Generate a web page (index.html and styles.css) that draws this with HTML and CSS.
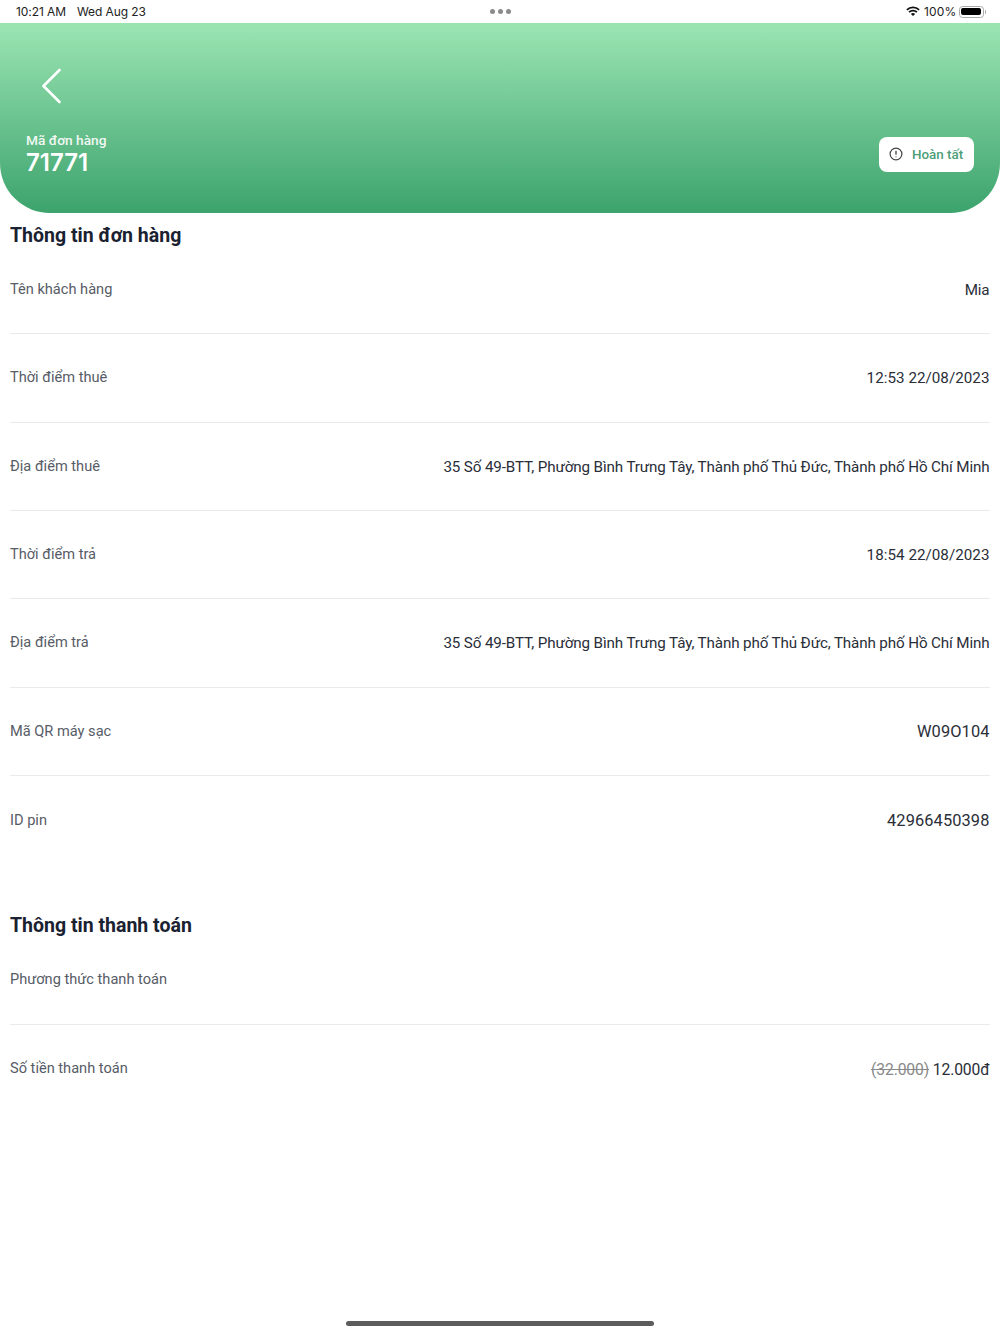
FILE: index.html
```html
<!doctype html>
<html lang="vi">
<head>
<meta charset="utf-8">
<title>Thông tin đơn hàng</title>
<link rel="stylesheet" href="styles.css">
</head>
<body>
<div class="statusbar">
	<div class="status-time"><span>10:21 AM</span><span>Wed Aug 23</span></div>
	<div class="status-dots"><i></i><i></i><i></i></div>
	<div class="status-right">
		<svg class="wifi" width="14" height="11" viewBox="0 0 16 12">
			<path d="M1 4.2a10 10 0 0 1 14 0" fill="none" stroke="#111" stroke-width="2"/>
			<path d="M3.5 6.8a6.4 6.4 0 0 1 9 0" fill="none" stroke="#111" stroke-width="2"/>
			<path d="M8 11.2 5.6 8.8a3.4 3.4 0 0 1 4.8 0z" fill="#111"/>
		</svg>
		<span>100%</span>
		<div class="battery"><div class="battery-fill"></div></div>
		<div class="battery-tip"></div>
	</div>
</div>
<header class="orderhead">
	<svg class="backicon" width="20" height="36" viewBox="0 0 20 36">
		<path d="M18.5 2 2.5 18l16 16" fill="none" stroke="#fff" stroke-width="2.6" stroke-linecap="round" stroke-linejoin="round"/>
	</svg>
	<div class="orderhead-row">
		<div>
			<div class="order-label">Mã đơn hàng</div>
			<div class="order-id">71771</div>
		</div>
		<div class="donebtn">
			<svg width="14" height="14" viewBox="0 0 14 14">
				<circle cx="7" cy="7" r="5.9" fill="none" stroke="#444" stroke-width="1.2"/>
				<path d="M7 3.8v3.9M7 9.4v.9" fill="none" stroke="#444" stroke-width="1.3"/>
			</svg>
			<span>Hoàn tất</span>
		</div>
	</div>
</header>
<section class="infosection">
	<h2>Thông tin đơn hàng</h2>
	<div class="inforow"><span class="lbl">Tên khách hàng</span><span class="val">Mia</span></div>
	<div class="inforow"><span class="lbl">Thời điểm thuê</span><span class="val date">12:53 22/08/2023</span></div>
	<div class="inforow"><span class="lbl">Địa điểm thuê</span><span class="val">35 Số 49-BTT, Phường Bình Trưng Tây, Thành phố Thủ Đức, Thành phố Hồ Chí Minh</span></div>
	<div class="inforow"><span class="lbl">Thời điểm trả</span><span class="val date">18:54 22/08/2023</span></div>
	<div class="inforow"><span class="lbl">Địa điểm trả</span><span class="val">35 Số 49-BTT, Phường Bình Trưng Tây, Thành phố Thủ Đức, Thành phố Hồ Chí Minh</span></div>
	<div class="inforow"><span class="lbl">Mã QR máy sạc</span><span class="val num">W09O104</span></div>
	<div class="inforow"><span class="lbl">ID pin</span><span class="val num">42966450398</span></div>
</section>
<section class="infosection second">
	<h2>Thông tin thanh toán</h2>
	<div class="inforow"><span class="lbl">Phương thức thanh toán</span><span class="val"></span></div>
	<div class="inforow"><span class="lbl">Số tiền thanh toán</span><span class="val amount"><s>(32.000)</s> 12.000đ</span></div>
</section>
<div class="homebar"></div>
</body>
</html>
```

FILE: styles.css
```css
html, body {
	height: 100%;
	margin: 0;
	background: #fff;
}
body {
	display: flex;
	flex-direction: column;
	height: 1334px;
	overflow: hidden;
	font-family: Roboto, "Liberation Sans", sans-serif;
	color: #1c2230;
}
.statusbar {
	display: grid;
	grid-template-columns: 1fr auto 1fr;
	align-items: center;
	height: 23px;
	padding: 0 14px 0 16px;
	font-family: Inter, sans-serif;
	font-size: 12px;
	color: #222;
}
.status-time {
	display: flex;
	gap: 11px;
	letter-spacing: -0.08px;
}
.status-dots {
	display: flex;
	gap: 3px;
	margin-left: -2px;
}
.status-dots i {
	width: 5px;
	height: 5px;
	border-radius: 50%;
	background: #8a8a8a;
}
.status-right {
	display: flex;
	align-items: center;
	justify-content: flex-end;
}
.status-right span {
	margin: 0 2px 0 4px;
	letter-spacing: 0.2px;
}
.battery {
	width: 25px;
	height: 12px;
	padding: 1.5px;
	box-sizing: border-box;
	border: 1px solid #aaa;
	border-radius: 3.5px;
}
.battery-fill {
	height: 100%;
	border-radius: 2px;
	background: #000;
}
.battery-tip {
	width: 1.5px;
	height: 4px;
	margin-left: 1px;
	border-radius: 0 1px 1px 0;
	background: #aaa;
}
.orderhead {
	display: flex;
	flex-direction: column;
	height: 190px;
	box-sizing: border-box;
	padding: 45px 26px 0;
	border-radius: 0 0 50px 50px;
	background: linear-gradient(#9be5b3, #3ca36d);
}
.backicon {
	margin-left: 15px;
}
.orderhead-row {
	display: flex;
	justify-content: space-between;
	align-items: center;
	margin-top: 27px;
}
.order-label {
	font-size: 13.7px;
	font-weight: 500;
	line-height: 18px;
	color: #f1f8f3;
}
.order-id {
	font-family: Inter, sans-serif;
	font-size: 24px;
	font-weight: 600;
	line-height: 28px;
	color: #fff;
}
.donebtn {
	display: flex;
	align-items: center;
	gap: 9px;
	width: 95px;
	height: 35px;
	box-sizing: border-box;
	padding-left: 10px;
	border-radius: 8px;
	background: #fff;
	font-size: 13.4px;
	font-weight: 500;
	color: #4d9e79;
}
.infosection {
	padding: 0 10.5px 0 10px;
}
.infosection.second {
	margin-top: 39px;
}
.infosection h2 {
	height: 21px;
	margin: 0;
	padding-top: 12px;
	font-size: 19.5px;
	font-weight: 700;
	line-height: 21px;
	color: #1a2130;
}
.inforow {
	display: flex;
	justify-content: space-between;
	align-items: center;
	height: 88.33px;
	box-sizing: border-box;
	border-bottom: 1px solid #e9ebea;
}
.inforow:last-child {
	border-bottom: 0;
}
.lbl {
	padding-bottom: 1px;
	font-size: 14.6px;
	color: #575c66;
}
.val {
	padding-top: 1px;
	font-size: 15.2px;
	letter-spacing: -0.13px;
	color: #2a2e38;
}
.val.date {
	letter-spacing: 0.03px;
}
.val.num {
	font-size: 16.4px;
	letter-spacing: 0.1px;
}
.val.amount {
	font-size: 15.7px;
}
.val s {
	color: #8a8a8a;
}
.homebar {
	width: 308px;
	height: 5px;
	margin: auto auto 8px;
	border-radius: 3px;
	background: #5c5c5c;
}
```
